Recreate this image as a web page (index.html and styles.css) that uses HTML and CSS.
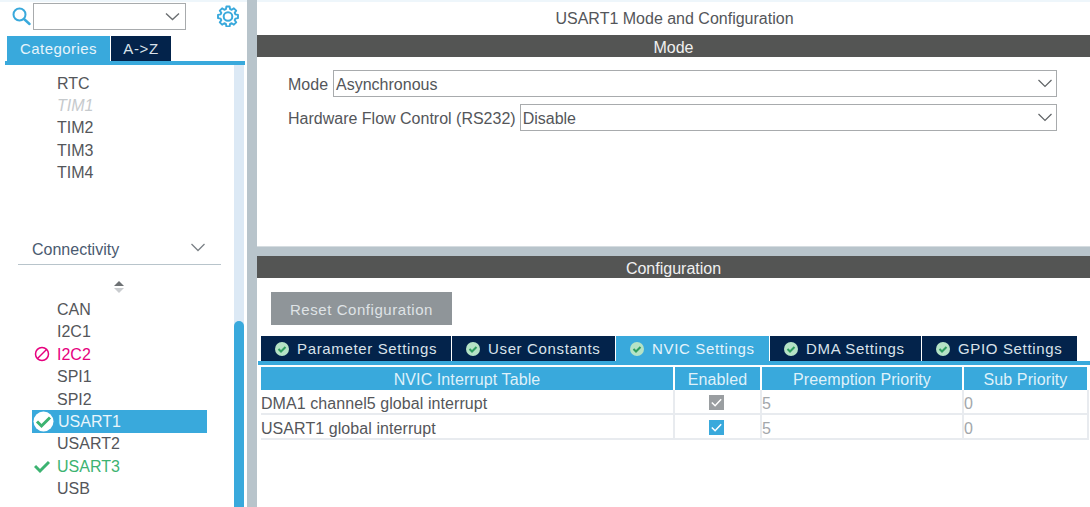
FILE: index.html
```html
<!DOCTYPE html>
<html lang="en">

<head>
    <meta charset="UTF-8">
    <meta name="viewport" content="width=device-width, initial-scale=1.0">
    <link rel="stylesheet" href="styles.css">
    <title>USART1 Mode and Configuration</title>
</head>

<body>

    <aside class="sidebar">
        <div class="search-row">
            <svg class="search-icon" width="19" height="19" viewBox="0 0 19 19">
                <circle cx="7.500" cy="7.500" r="6" fill="none" stroke="#39a9dc" stroke-width="2" />
                <path d="M12 12L17.500 17" fill="none" stroke="#39a9dc" stroke-width="2.400" stroke-linecap="round" />
            </svg>
            <div class="search-box">
                <svg width="15" height="9" viewBox="0 0 15 9">
                    <path d="M1 1.500L7.500 7.500L14 1.500" fill="none" stroke="#6b6f72" stroke-width="1.400" />
                </svg>
            </div>
            <svg class="gear-icon" width="22" height="22" viewBox="0 0 22 22">
                <path d="M9.400 1.500h3.200l.5 2.600 1.600.7 2.200-1.500 2.300 2.300-1.500 2.200.7 1.600 2.600.5v3.200l-2.600.5-.7 1.600 1.500 2.200-2.300 2.300-2.200-1.500-1.600.7-.5 2.600H9.400l-.5-2.600-1.600-.7-2.200 1.500-2.300-2.300 1.500-2.200-.7-1.600-2.600-.5V9.900l2.600-.5.700-1.600-1.500-2.200 2.300-2.300 2.200 1.500 1.600-.7z" fill="none" stroke="#39a9dc" stroke-width="1.900" stroke-linejoin="round" />
                <circle cx="11" cy="11.500" r="4.300" fill="none" stroke="#39a9dc" stroke-width="2" />
            </svg>
        </div>

        <div class="side-tabs">
            <div class="side-tab side-tab-active">Categories</div>
            <div class="side-tab">A-&gt;Z</div>
        </div>

        <div class="side-body">
            <div class="side-list">
                <ul class="ip-list">
                    <li class="ip-item">RTC</li>
                    <li class="ip-item ip-disabled">TIM1</li>
                    <li class="ip-item">TIM2</li>
                    <li class="ip-item">TIM3</li>
                    <li class="ip-item">TIM4</li>
                </ul>

                <div class="group-head">
                    <span>Connectivity</span>
                    <svg width="16" height="9" viewBox="0 0 16 9">
                        <path d="M1.500 1L8 7.500L14.500 1" fill="none" stroke="#7b8186" stroke-width="1.300" />
                    </svg>
                </div>

                <div class="sort-arrows">
                    <svg width="12" height="14" viewBox="0 0 12 14">
                        <path d="M6 1L11 6H1z" fill="#6d7174" />
                        <path d="M6 13L11 8H1z" fill="#c9cccf" />
                    </svg>
                </div>

                <ul class="ip-list">
                    <li class="ip-item">CAN</li>
                    <li class="ip-item">I2C1</li>
                    <li class="ip-item ip-error">
                        <svg class="ip-icon" width="16" height="16" viewBox="0 0 16 16">
                            <circle cx="8" cy="8" r="6.500" fill="none" stroke="#e6007e" stroke-width="1.500" />
                            <path d="M3.500 12.500L12.500 3.500" stroke="#e6007e" stroke-width="1.500" />
                        </svg>
                        I2C2
                    </li>
                    <li class="ip-item">SPI1</li>
                    <li class="ip-item">SPI2</li>
                    <li class="ip-item ip-selected">
                        <svg class="ip-icon-big" width="21" height="21" viewBox="0 0 21 21">
                            <circle cx="10.500" cy="10.500" r="10" fill="#fff" />
                            <path d="M4 10.500L8.500 15L17 6.500" fill="none" stroke="#3cb371" stroke-width="3" />
                        </svg>
                        USART1
                    </li>
                    <li class="ip-item">USART2</li>
                    <li class="ip-item ip-ok">
                        <svg class="ip-icon" width="16" height="16" viewBox="0 0 16 16">
                            <path d="M1 8L6 13L15 4" fill="none" stroke="#3cb371" stroke-width="3" />
                        </svg>
                        USART3
                    </li>
                    <li class="ip-item">USB</li>
                </ul>
            </div>
            <div class="scroll-track">
                <div class="scroll-thumb"></div>
            </div>
        </div>
    </aside>

    <main class="content">
        <div class="mode-panel">
            <h1 class="page-title">USART1 Mode and Configuration</h1>
            <div class="bar">Mode</div>
            <div class="mode-form">
                <div class="form-row">
                    <span class="mode-label">Mode</span>
                    <div class="dropdown">
                        <span>Asynchronous</span>
                        <svg width="16" height="9" viewBox="0 0 16 9">
                            <path d="M1.500 1L8 7.500L14.500 1" fill="none" stroke="#5f6366" stroke-width="1.200" />
                        </svg>
                    </div>
                </div>
                <div class="form-row">
                    <span>Hardware Flow Control (RS232)</span>
                    <div class="dropdown">
                        <span>Disable</span>
                        <svg width="16" height="9" viewBox="0 0 16 9">
                            <path d="M1.500 1L8 7.500L14.500 1" fill="none" stroke="#5f6366" stroke-width="1.200" />
                        </svg>
                    </div>
                </div>
            </div>
        </div>

        <div class="config-panel">
            <div class="bar">Configuration</div>
            <button class="reset-btn" type="button">Reset Configuration</button>

            <div class="config-tabs">
                <div class="config-tab tab-param">
                    <svg class="tab-check" width="14" height="14" viewBox="0 0 14 14">
                        <circle cx="7" cy="7" r="7" fill="#b5e3c5" />
                        <path d="M3.500 7L6 9.500L10.500 5" fill="none" stroke="#2f9e60" stroke-width="2" />
                    </svg>
                    Parameter Settings
                </div>
                <div class="config-tab tab-user">
                    <svg class="tab-check" width="14" height="14" viewBox="0 0 14 14">
                        <circle cx="7" cy="7" r="7" fill="#b5e3c5" />
                        <path d="M3.500 7L6 9.500L10.500 5" fill="none" stroke="#2f9e60" stroke-width="2" />
                    </svg>
                    User Constants
                </div>
                <div class="config-tab tab-nvic config-tab-active">
                    <svg class="tab-check" width="14" height="14" viewBox="0 0 14 14">
                        <circle cx="7" cy="7" r="7" fill="#b5e3c5" />
                        <path d="M3.500 7L6 9.500L10.500 5" fill="none" stroke="#2f9e60" stroke-width="2" />
                    </svg>
                    NVIC Settings
                </div>
                <div class="config-tab tab-dma">
                    <svg class="tab-check" width="14" height="14" viewBox="0 0 14 14">
                        <circle cx="7" cy="7" r="7" fill="#b5e3c5" />
                        <path d="M3.500 7L6 9.500L10.500 5" fill="none" stroke="#2f9e60" stroke-width="2" />
                    </svg>
                    DMA Settings
                </div>
                <div class="config-tab tab-gpio">
                    <svg class="tab-check" width="14" height="14" viewBox="0 0 14 14">
                        <circle cx="7" cy="7" r="7" fill="#b5e3c5" />
                        <path d="M3.500 7L6 9.500L10.500 5" fill="none" stroke="#2f9e60" stroke-width="2" />
                    </svg>
                    GPIO Settings
                </div>
            </div>

            <div class="nvic-table">
                <div class="th">NVIC Interrupt Table</div>
                <div class="th">Enabled</div>
                <div class="th">Preemption Priority</div>
                <div class="th">Sub Priority</div>

                <div class="td">DMA1 channel5 global interrupt</div>
                <div class="td td-center">
                    <span class="checkbox checkbox-locked">
                        <svg width="15" height="15" viewBox="0 0 16 16">
                            <path d="M3 8L6.500 11.500L13 4.500" fill="none" stroke="#fff" stroke-width="1.600" />
                        </svg>
                    </span>
                </div>
                <div class="td td-muted">5</div>
                <div class="td td-muted">0</div>

                <div class="td">USART1 global interrupt</div>
                <div class="td td-center">
                    <span class="checkbox">
                        <svg width="15" height="15" viewBox="0 0 16 16">
                            <path d="M3 8L6.500 11.500L13 4.500" fill="none" stroke="#fff" stroke-width="1.600" />
                        </svg>
                    </span>
                </div>
                <div class="td td-muted">5</div>
                <div class="td td-muted">0</div>
            </div>
        </div>
    </main>

</body>

</html>
```

FILE: styles.css
```css
* {
    box-sizing: border-box;
}

body {
    margin: 0;
    display: flex;
    width: 1090px;
    height: 507px;
    overflow: hidden;
    background: #b8c4cb;
    font-family: "Liberation Sans", Arial, sans-serif;
    font-size: 16px;
    color: #54565a;
}

/* left column */
.sidebar {
    width: 247px;
    height: 507px;
    flex-shrink: 0;
    background: #fff;
    border-top: 2px solid #eef6fb;
}

.search-row {
    display: flex;
    align-items: center;
    height: 34px;
    padding: 0 0 5px 12px;
}

.search-icon {
    flex-shrink: 0;
}

.search-box {
    display: flex;
    align-items: center;
    justify-content: flex-end;
    width: 153px;
    height: 27px;
    margin-left: 2px;
    padding-right: 5px;
    border: 1px solid #a8abad;
}

.gear-icon {
    margin: 0 0 1px 31px;
}

.side-tabs {
    display: flex;
    gap: 1px;
    height: 25px;
    margin-left: 7px;
}

.side-tab {
    display: flex;
    align-items: center;
    justify-content: center;
    width: 60px;
    background: #03234b;
    color: #d9e2ea;
    font-size: 15px;
    letter-spacing: 0.6px;
}

.side-tab-active {
    width: 103px;
    background: #39a9dc;
    color: #e6f4fb;
    letter-spacing: 0.45px;
}

.side-body {
    display: flex;
    height: 442px;
    margin-left: 5px;
    width: 240px;
    border-top: 4px solid #39a9dc;
}

.side-list {
    width: 229px;
    padding-top: 7px;
}

.ip-list {
    margin: 0;
    padding: 0 0 0 27px;
    list-style: none;
}

.ip-item {
    position: relative;
    display: flex;
    align-items: center;
    width: 175px;
    height: 22.4px;
    padding: 1px 0 0 25px;
}

.ip-disabled {
    color: #c6cacd;
    font-style: italic;
}

.ip-error {
    color: #e6007e;
}

.ip-ok {
    color: #3cb371;
}

.ip-selected {
    background: #39a9dc;
    color: #e8f5fb;
    padding-left: 26px;
}

.ip-icon {
    position: absolute;
    left: 2px;
    top: 3px;
}

.ip-icon-big {
    position: absolute;
    left: 1px;
    top: 1px;
}

.group-head {
    display: flex;
    align-items: center;
    justify-content: space-between;
    width: 203px;
    height: 28px;
    margin: 53px 0 0 13px;
    padding: 1px 15px 1px 14px;
    border-bottom: 1px solid #b8c4cb;
    color: #4a5a70;
}

.group-head svg {
    margin-bottom: 5px;
}

.sort-arrows {
    display: flex;
    justify-content: center;
    width: 202px;
    height: 33.3px;
    margin-left: 13px;
    padding-top: 15px;
}

.scroll-track {
    width: 10px;
    padding-top: 256px;
    background: #dce9f5;
}

.scroll-thumb {
    height: 186px;
    background: #39a9dc;
    border-radius: 5px 5px 0 0;
}

/* right column */
.content {
    width: 833px;
    height: 507px;
    margin-left: 10px;
    flex-shrink: 0;
}

.mode-panel {
    height: 247px;
    background: #fff;
    border-top: 2px solid #eef6fb;
    border-bottom: 1px solid #d5dce0;
}

.page-title {
    margin: 0;
    height: 33px;
    padding-left: 2px;
    font-size: 16px;
    font-weight: normal;
    line-height: 34px;
    text-align: center;
}

.bar {
    height: 22px;
    padding-top: 1px;
    background: #545554;
    color: #f0f0f0;
    line-height: 23px;
    text-align: center;
}

.mode-form {
    padding: 13px 33px 0 31px;
}

.form-row {
    display: flex;
    align-items: center;
    gap: 4px;
    height: 27px;
    margin-bottom: 7px;
}

.form-row span {
    padding-top: 2px;
}

.mode-label {
    margin-right: 1px;
}

.dropdown {
    display: flex;
    align-items: center;
    justify-content: space-between;
    flex: 1;
    height: 27px;
    padding: 0 3px 0 2px;
    border: 1px solid #a8abad;
}

.config-panel {
    height: 251px;
    margin-top: 9px;
    background: #fff;
}

.reset-btn {
    display: block;
    width: 181px;
    height: 33px;
    margin: 14px 0 11px 14px;
    padding-top: 3px;
    border: 0;
    background: #8f9599;
    color: #dfe3e6;
    font-family: inherit;
    font-size: 15px;
    letter-spacing: 0.55px;
}

.config-tabs {
    display: flex;
    gap: 1px;
    height: 29px;
    margin-left: 1px;
    padding-left: 3px;
    border-bottom: 4px solid #39a9dc;
}

.config-tab {
    display: flex;
    align-items: center;
    gap: 8px;
    height: 25px;
    padding-left: 14px;
    background: #03234b;
    color: #d9e2ea;
    font-size: 15px;
    letter-spacing: 0.65px;
}

.config-tab-active {
    background: #39a9dc;
    color: #e6f4fb;
}

.tab-param { width: 190px; }
.tab-user { width: 163px; }
.tab-nvic { width: 153px; }
.tab-dma { width: 151px; }
.tab-gpio { width: 155px; }

.tab-check {
    flex-shrink: 0;
}

.nvic-table {
    display: grid;
    grid-template-columns: 412px 85px 200px 123px;
    column-gap: 2px;
    margin: 2px 0 0 4px;
}

.th {
    height: 23px;
    background: #39a9dc;
    color: #dff1fa;
    line-height: 25px;
    letter-spacing: 0.1px;
    text-align: center;
}

.td {
    height: 25px;
    padding-top: 2px;
    border-bottom: 2px solid #e8ebef;
    box-shadow: 2px 0 0 #e8ebef;
    letter-spacing: 0.07px;
    line-height: 24px;
}

.td-center {
    display: flex;
    align-items: center;
    justify-content: center;
    padding-right: 2px;
}

.td-muted {
    color: #a3a7ab;
}

.checkbox {
    display: flex;
    width: 15px;
    height: 15px;
    background: #39a9dc;
}

.checkbox-locked {
    background: #9a9ea1;
}
```
